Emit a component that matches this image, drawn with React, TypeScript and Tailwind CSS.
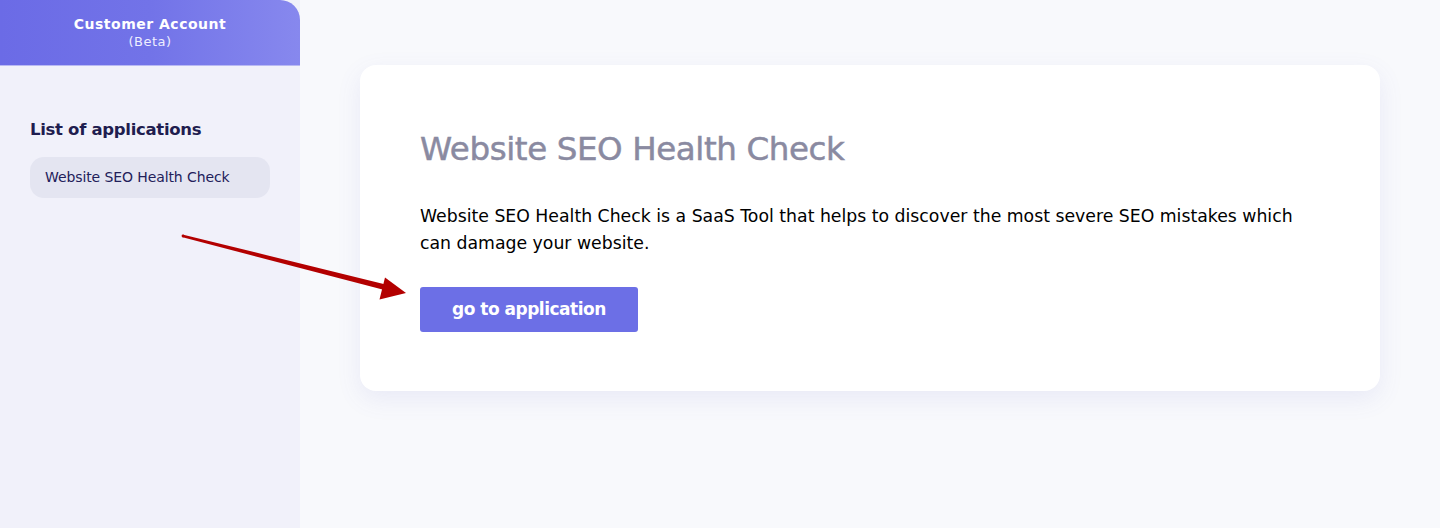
import React from 'react';

const font = { fontFamily: '"DejaVu Sans", "Noto Sans", sans-serif' };

const Sidebar: React.FC = () => (
  <aside className="w-[300px] shrink-0 bg-[#f1f1fa] min-h-[528px] flex flex-col">
    {/* Header */}
    <div className="h-[66px] rounded-tr-[20px] bg-gradient-to-r from-[#6b6be6] via-[#7273e8] to-[#8788ee] border-b border-[#b9b9f3] flex flex-col items-center pt-[15px] text-white">
      <div className="text-[14px] font-semibold tracking-[0.5px] leading-[19px]">Customer Account</div>
      <div className="text-[13px] tracking-[0.5px] leading-[16px] text-[#eef]">(Beta)</div>
    </div>

    {/* Applications */}
    <div className="px-[30px] pt-[51px]">
      <h2 className="text-[16.5px] font-bold text-[#1f1d4f] leading-[25px] tracking-[-0.3px]">List of applications</h2>
      <div className="mt-[15px] h-[41px] rounded-[14px] bg-[#e4e5f1] flex items-center px-[15px] text-[14px] font-medium text-[#22205a] tracking-[-0.1px]">
        Website SEO Health Check
      </div>
    </div>
  </aside>
);

// annotation arrow, tapered shaft
const Arrow: React.FC = () => (
  <svg className="absolute left-[180px] top-[230px] pointer-events-none" width="232" height="72" viewBox="0 0 232 72">
    <polygon points="3.36,4.65 2.64,7.35 207.29,60.7 208.71,55.3" fill="#b30000" />
    <circle cx="3" cy="6" r="1.4" fill="#b30000" />
    <polygon points="226,63 205,47.5 199.5,69.5" fill="#b30000" />
  </svg>
);

export default function App() {
  return (
    <div className="relative flex w-full min-h-[528px] bg-[#f8f9fc]" style={font}>
      <Sidebar />
      <main className="flex-1 pl-[60px] pr-[60px] pt-[65px]">
        <section className="bg-white rounded-[16px] shadow-[0_8px_24px_rgba(100,100,200,0.10)] px-[60px] pt-[62px] pb-[59px]">
          <h1 className="text-[32.5px] font-medium text-[#8a8aa1] leading-[44px] tracking-[-0.4px] [-webkit-text-stroke:0.5px_#8a8aa1]">Website SEO Health Check</h1>
          <p className="mt-[32px] text-[17.3px] leading-[27px] text-black max-w-[900px]">
            Website SEO Health Check is a SaaS Tool that helps to discover the most severe SEO mistakes which can damage your website.
          </p>
          <button className="mt-[30px] h-[45px] px-[32px] rounded-[3px] bg-[#6c6fe6] text-white text-[17px] font-semibold tracking-[-0.5px]">
            go to application
          </button>
        </section>
      </main>
      <Arrow />
    </div>
  );
}
